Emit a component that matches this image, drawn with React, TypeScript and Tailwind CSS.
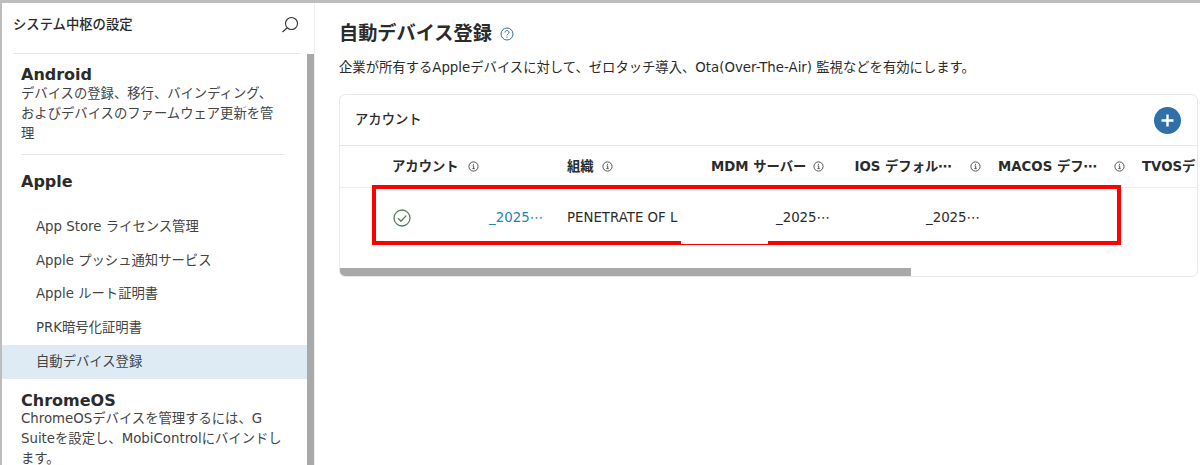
const font = "[font-family:'DejaVu_Sans','Noto_Sans_CJK_JP',sans-serif]"

const InfoIcon = () => (
    <svg width="11" height="11" viewBox="0 0 11 11" fill="none" className="shrink-0">
        <circle cx="5.5" cy="5.5" r="4.6" stroke="#444" strokeWidth="0.9" />
        <path d="M4.6 4.9h1.1v2.6M4.4 7.6h2.3M5.5 2.9v1" stroke="#444" strokeWidth="0.9" />
    </svg>
)

const navItems = [
    'App Store ライセンス管理',
    'Apple プッシュ通知サービス',
    'Apple ルート証明書',
    'PRK暗号化証明書',
]

const Sidebar = () => (
    <aside className="flex h-full w-[313px] shrink-0 flex-col border-r border-[#eeeeee]">
        <div className="mr-[14px] ml-[11px] flex h-[51px] items-center justify-between border-b border-[#e6e6e6] pr-[1px]">
            <span className="-mt-[6px] text-[13.33px] font-medium text-[#2b2b2b]">システム中枢の設定</span>
            <svg width="18" height="18" viewBox="0 0 18 18" fill="none" className="-mt-[6px]">
                <circle cx="10.500" cy="7.500" r="6" stroke="#333" strokeWidth="1.1" />
                <path d="M6 12l-4.500 4" stroke="#333" strokeWidth="1.1" />
            </svg>
        </div>
        <div className="flex min-h-0 flex-1">
            <div className="min-w-0 flex-1 overflow-hidden">
                <section className="mr-[23px] ml-[19px] border-b border-[#e6e6e6] pt-[12px] pb-[10px]">
                    <h3 className="text-base leading-[18px] font-semibold text-[#2b2b2b]">Android</h3>
                    <p className="text-[13.33px] leading-[20px] text-[#444]">
                        デバイスの登録、移行、バインディング、およびデバイスのファームウェア更新を管理
                    </p>
                </section>
                <h3 className="mx-[19px] mt-[17px] mb-[18px] text-base leading-[20px] font-semibold text-[#2b2b2b]">
                    Apple
                </h3>
                {navItems.map((item) => (
                    <div key={item} className="flex h-[33.75px] items-center pl-[34px] text-[13.33px] text-[#444]">
                        {item}
                    </div>
                ))}
                <div className="flex h-[33.75px] items-center bg-[#dfebf4] pl-[34px] text-[13.33px] text-[#444]">
                    自動デバイス登録
                </div>
                <section className="mr-[23px] ml-[19px] pt-[13px]">
                    <h3 className="text-base leading-[17px] font-semibold text-[#2b2b2b]">ChromeOS</h3>
                    <p className="text-[13.33px] leading-[20px] text-[#444]">
                        ChromeOSデバイスを管理するには、G Suiteを設定し、MobiControlにバインドします。
                    </p>
                </section>
            </div>
            <div className="w-[7px] shrink-0 bg-[#a9a9a9]" />
        </div>
    </aside>
)

const columns = [
    { label: 'MDM サーバー', layout: 'gap-[7px]' },
    { label: 'IOS デフォル⋯', layout: 'justify-between pr-[17px]' },
    { label: 'MACOS デフ⋯', layout: 'justify-between pr-[17px]' },
]

const Table = () => (
    <div className="relative mt-[16px] h-[183px] overflow-hidden rounded-md border border-[#e8e8e8]">
        <div className="flex h-[51px] items-center justify-between border-b border-[#e8e8e8] pr-[16px] pl-[15px]">
            <span className="text-[13.33px] font-medium text-[#2b2b2b]">アカウント</span>
            <span className="flex h-[27px] w-[27px] items-center justify-center rounded-full bg-[#2f70a8]">
                <svg width="15" height="15" viewBox="0 0 15 15">
                    <path d="M7.500 1.500v12M1.500 7.500h12" stroke="#fff" strokeWidth="2.400" />
                </svg>
            </span>
        </div>
        <div className="flex h-[42px] items-center overflow-hidden border-b border-[#eeeeee] text-[13.33px] font-semibold whitespace-nowrap text-[#2b2b2b]">
            <div className="flex w-[227px] shrink-0 items-center gap-[9px] pl-[52px]">
                アカウント <InfoIcon />
            </div>
            <div className="flex w-[144px] shrink-0 items-center gap-2">
                組織 <InfoIcon />
            </div>
            {columns.map((col) => (
                <div key={col.label} className={`flex w-[143.500px] shrink-0 items-center ${col.layout}`}>
                    {col.label} <InfoIcon />
                </div>
            ))}
            <div className="ml-[0.5px] shrink-0">TVOSデフォルト</div>
        </div>
        <div className="flex h-[60px] items-center text-[13.33px] whitespace-nowrap text-[#2b2b2b]">
            <div className="flex w-[227px] shrink-0 items-center justify-between pr-[24px] pl-[53px]">
                <svg width="18" height="18" viewBox="0 0 18 18" fill="none">
                    <circle cx="9" cy="9" r="8" stroke="#55805f" strokeWidth="1.300" />
                    <path d="M5 9.200l3 3 5.200-5.600" stroke="#55805f" strokeWidth="1.300" />
                </svg>
                <span className="text-[#1f86b0]">_2025⋯</span>
            </div>
            <div className="w-[144px] shrink-0">
                <div className="w-[113px] overflow-hidden">PENETRATE OF L</div>
            </div>
            <div className="w-[144px] shrink-0 pl-[65px]">_2025⋯</div>
            <div className="shrink-0 pl-[71px]">_2025⋯</div>
        </div>
        <div className="mt-[20px] h-[8px] w-[571px] bg-[#a9a9a9]" />
        <div className="absolute top-[90px] left-[32px] h-[60px] w-[749px] border-4 border-[#ff0000]" />
        <div className="absolute top-[146px] left-[341px] h-[3px] w-[87px] bg-white" />
    </div>
)

export default function App() {
    return (
        <div className={`flex h-[465px] w-[1200px] overflow-hidden border-t-[3px] border-l-[2px] border-[#bdbdbd] bg-white ${font}`}>
            <Sidebar />
            <main className="min-w-0 flex-1 pt-[18px] pr-[2px] pl-[24px]">
                <div className="flex items-center gap-[8px]">
                    <h1 className="text-[19.2px] leading-[26px] font-bold text-[#2b2b2b]">自動デバイス登録</h1>
                    <svg width="14" height="14" viewBox="0 0 14 14" fill="none" className="-mt-[1px]">
                        <circle cx="7" cy="7" r="6" stroke="#2f70a8" strokeWidth="1" />
                        <path d="M5 5.500c0-2.600 4-2.600 4 0 0 1.500-2 1.500-2 3M7 9.600v1.200" stroke="#2f70a8" strokeWidth="1" />
                    </svg>
                </div>
                <p className="mt-[11px] text-[13.33px] leading-[20px] text-[#2b2b2b]">
                    企業が所有するAppleデバイスに対して、ゼロタッチ導入、Ota(Over-The-Air) 監視などを有効にします。
                </p>
                <Table />
            </main>
        </div>
    )
}
